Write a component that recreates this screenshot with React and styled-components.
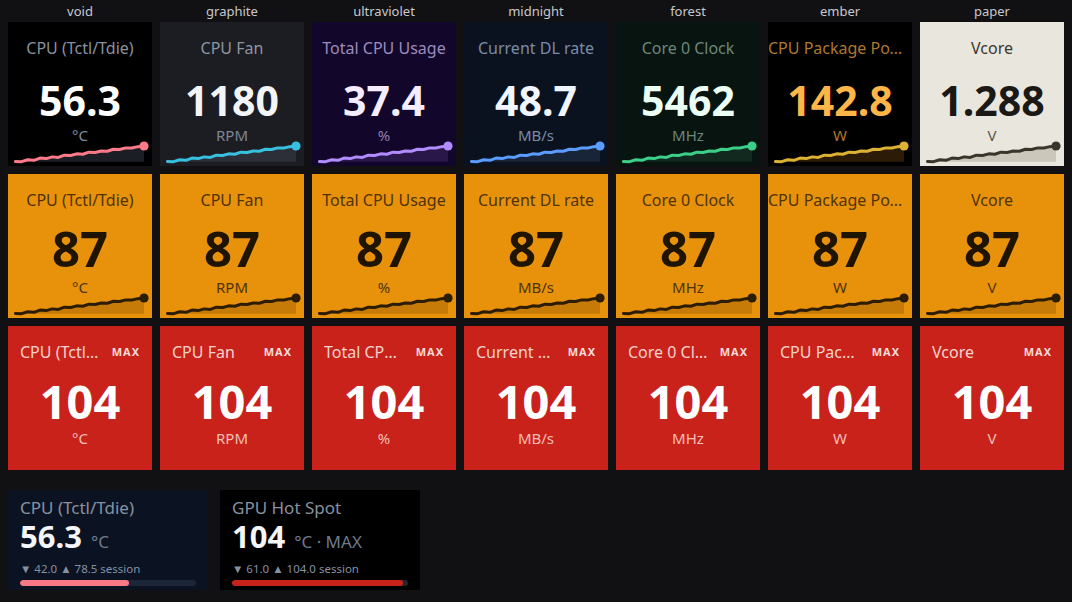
import React from "react";
import styled, { createGlobalStyle } from "styled-components";

const GlobalStyle = createGlobalStyle`
  html, body {
    margin: 0;
    padding: 0;
    background: #111113;
  }
  body {
    font-family: "Noto Sans", "Open Sans", sans-serif;
    -webkit-font-smoothing: antialiased;
  }
  * { box-sizing: border-box; }
`;

const themes = {
  void: { bg: "#000000", title: "#8a919e", value: "#ffffff", unit: "#858c99", line: "#ff7b8a", fill: "#1b1e25" },
  graphite: { bg: "#1c1d22", title: "#8e95a1", value: "#f3f4f6", unit: "#7e8592", line: "#38c0e0", fill: "#2c2f37" },
  ultraviolet: { bg: "#12072a", title: "#9d8bbd", value: "#f4ecff", unit: "#8e7daf", line: "#b28cff", fill: "#2a1749" },
  midnight: { bg: "#0a1220", title: "#7a8ca6", value: "#f1f5ff", unit: "#7a8ca6", line: "#5a9cff", fill: "#182539" },
  forest: { bg: "#071410", title: "#6c8779", value: "#ebfff4", unit: "#6c8779", line: "#3ccf89", fill: "#12291f" },
  ember: { bg: "#000000", title: "#ad782b", value: "#ffb648", unit: "#ad782b", line: "#ddb133", fill: "#2b1b07" },
  paper: { bg: "#e9e6de", title: "#3b3731", value: "#1b1915", unit: "#5b564d", line: "#3a352a", fill: "#cbc7bb" },
  warn: { bg: "#e8920c", title: "#4f3300", value: "#1e1400", unit: "#4f3300", line: "#2b1c04", fill: "#c67b08" },
  alert: { bg: "#c9221a", title: "#f6d2cc", value: "#ffffff", unit: "#f4beb7", line: "none", fill: "none" },
};

const sensors = [
  { name: "CPU (Tctl/Tdie)", value: "56.3", unit: "°C", theme: "void" },
  { name: "CPU Fan", value: "1180", unit: "RPM", theme: "graphite" },
  { name: "Total CPU Usage", value: "37.4", unit: "%", theme: "ultraviolet" },
  { name: "Current DL rate", value: "48.7", unit: "MB/s", theme: "midnight" },
  { name: "Core 0 Clock", value: "5462", unit: "MHz", theme: "forest" },
  { name: "CPU Package Power", value: "142.8", unit: "W", theme: "ember" },
  { name: "Vcore", value: "1.288", unit: "V", theme: "paper" },
];

// small jitter on top of a steady climb, same trace in every tile
const wiggle = [0, 0.9, -0.3, 1.0, -0.5, 0.8, -0.2, 1.1, -0.4, 0.7, -0.3, 0.9, -0.5, 0.6, -0.2, 0.8, -0.4, 0.6, -0.3, 0.5, -0.1, 0];

const sparkPoints = wiggle.map((w, i) => {
  const t = i / (wiggle.length - 1);
  return [1.5 + t * 128.5, 21.5 - t * 15.5 + w];
});

const Page = styled.div`
  padding: 0 8px;
  width: 1072px;
`;

const Grid = styled.div`
  display: grid;
  grid-template-columns: repeat(7, 144px);
  column-gap: 8px;
  row-gap: 8px;
`;

const HeaderRow = styled(Grid)`
  row-gap: 0;
`;

const Header = styled.div`
  height: 22px;
  line-height: 22px;
  text-align: center;
  font-size: 13px;
  color: #c8c8ce;
`;

const Tile = styled.div`
  height: 144px;
  background: ${(p) => p.$t.bg};
  display: flex;
  flex-direction: column;
  align-items: center;
  padding-top: 16px;
  overflow: hidden;
`;

const Title = styled.div`
  width: 100%;
  height: 20px;
  line-height: 20px;
  font-size: 16px;
  text-align: center;
  color: ${(p) => p.$t.title};
  white-space: nowrap;
  overflow: hidden;
  text-overflow: ellipsis;
`;

const Value = styled.div`
  margin-top: ${(p) => p.$mt}px;
  font-size: ${(p) => p.$size}px;
  line-height: ${(p) => p.$lh}px;
  font-weight: 700;
  color: ${(p) => p.$t.value};
`;

const Unit = styled.div`
  margin-top: ${(p) => p.$mt}px;
  font-size: 15px;
  line-height: 16px;
  color: ${(p) => p.$t.unit};
`;

const Spark = styled.svg`
  display: block;
  align-self: flex-start;
  margin: -3px 0 0 6px;
  width: 134px;
  height: 26px;
  overflow: visible;
`;

const TitleRow = styled.div`
  width: 100%;
  display: flex;
  align-items: center;
  justify-content: space-between;
  gap: 10px;
  padding: 0 12px;
  height: 20px;
  line-height: 20px;
`;

const AlertTitle = styled.div`
  flex: 0 1 auto;
  font-size: 16px;
  color: ${(p) => p.$t.title};
  white-space: nowrap;
  overflow: hidden;
  text-overflow: ellipsis;
  min-width: 0;
`;

const MaxTag = styled.div`
  flex: none;
  font-size: 11px;
  font-weight: 700;
  letter-spacing: 1px;
  color: rgba(255, 255, 255, 0.85);
`;

const Widgets = styled.div`
  display: flex;
  gap: 12px;
  margin-top: 20px;
`;

const Widget = styled.div`
  width: 200px;
  height: 100px;
  background: ${(p) => p.$bg};
  padding: 7px 12px 0;
`;

const WidgetTitle = styled.div`
  font-size: 17px;
  line-height: 22px;
  color: #8891a1;
`;

const WidgetValueRow = styled.div`
  display: flex;
  align-items: baseline;
  gap: 9px;
  margin-top: 1px;
  line-height: 32px;
`;

const WidgetValue = styled.span`
  font-size: 31px;
  font-weight: 700;
  color: #f4f6fa;
`;

const WidgetUnit = styled.span`
  font-size: 17px;
  color: #6f7a8c;
`;

const Stats = styled.div`
  margin-top: 4px;
  font-size: 11.5px;
  line-height: 14px;
  color: #8791a2;
`;

const Track = styled.div`
  margin-top: 4px;
  height: 6px;
  border-radius: 3px;
  background: ${(p) => p.$track};
  overflow: hidden;
`;

const Fill = styled.div`
  height: 100%;
  border-radius: 3px;
  background: ${(p) => p.$color};
`;

function Sparkline({ t }) {
  const line = sparkPoints.map(([x, y]) => `${x},${y}`).join(" ");
  const [ex, ey] = sparkPoints[sparkPoints.length - 1];
  const area = `${line} ${ex},21.8 1.5,21.8`;
  return (
    <Spark viewBox="0 0 134 26">
      <polygon points={area} fill={t.fill} />
      <polyline
        points={line}
        fill="none"
        stroke={t.line}
        strokeWidth="3"
        strokeLinecap="round"
        strokeLinejoin="round"
      />
      <circle cx={ex} cy={ey} r="4.6" fill={t.line} />
    </Spark>
  );
}

function LiveTile({ s }) {
  const t = themes[s.theme];
  return (
    <Tile $t={t}>
      <Title $t={t}>{s.name}</Title>
      <Value $t={t} $size={41} $lh={44} $mt={20}>
        {s.value}
      </Value>
      <Unit $t={t} $mt={5}>
        {s.unit}
      </Unit>
      <Sparkline t={t} />
    </Tile>
  );
}

function WarnTile({ s }) {
  const t = themes.warn;
  return (
    <Tile $t={t}>
      <Title $t={t}>{s.name}</Title>
      <Value $t={t} $size={49} $lh={52} $mt={12}>
        87
      </Value>
      <Unit $t={t} $mt={5}>
        {s.unit}
      </Unit>
      <Sparkline t={t} />
    </Tile>
  );
}

function AlertTile({ s }) {
  const t = themes.alert;
  return (
    <Tile $t={t}>
      <TitleRow>
        <AlertTitle $t={t}>{s.name}</AlertTitle>
        <MaxTag>MAX</MaxTag>
      </TitleRow>
      <Value $t={t} $size={47} $lh={50} $mt={14}>
        104
      </Value>
      <Unit $t={t} $mt={4}>
        {s.unit}
      </Unit>
    </Tile>
  );
}

export default function App() {
  return (
    <>
      <GlobalStyle />
      <Page>
        <HeaderRow>
          {sensors.map((s) => (
            <Header key={s.theme}>{s.theme}</Header>
          ))}
        </HeaderRow>
        <Grid>
          {sensors.map((s) => (
            <LiveTile key={s.theme} s={s} />
          ))}
          {sensors.map((s) => (
            <WarnTile key={"w" + s.theme} s={s} />
          ))}
          {sensors.map((s) => (
            <AlertTile key={"a" + s.theme} s={s} />
          ))}
        </Grid>
        <Widgets>
          <Widget $bg="#0b1322">
            <WidgetTitle>CPU (Tctl/Tdie)</WidgetTitle>
            <WidgetValueRow>
              <WidgetValue>56.3</WidgetValue>
              <WidgetUnit>°C</WidgetUnit>
            </WidgetValueRow>
            <Stats>▼ 42.0 ▲ 78.5 session</Stats>
            <Track $track="#1b2639">
              <Fill $color="#f87986" style={{ width: "62%" }} />
            </Track>
          </Widget>
          <Widget $bg="#000000">
            <WidgetTitle>GPU Hot Spot</WidgetTitle>
            <WidgetValueRow>
              <WidgetValue>104</WidgetValue>
              <WidgetUnit>°C · MAX</WidgetUnit>
            </WidgetValueRow>
            <Stats>▼ 61.0 ▲ 104.0 session</Stats>
            <Track $track="#24262b">
              <Fill $color="#c9221a" style={{ width: "97%" }} />
            </Track>
          </Widget>
        </Widgets>
      </Page>
    </>
  );
}
